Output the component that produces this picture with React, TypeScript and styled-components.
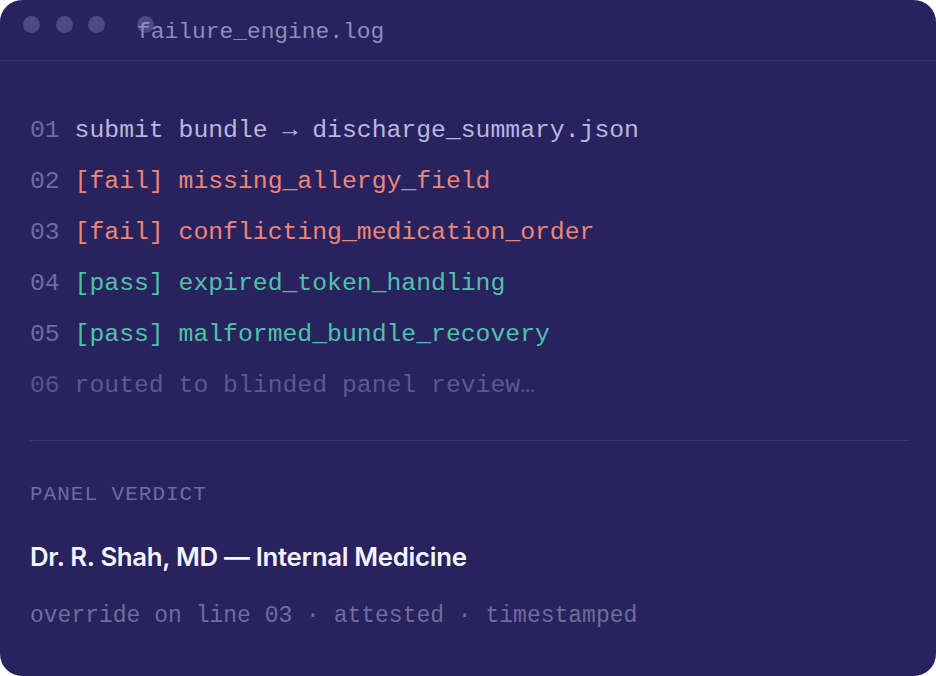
import React from "react";
import styled, { createGlobalStyle } from "styled-components";

const Global = createGlobalStyle`
  html, body { margin: 0; padding: 0; background: #ffffff; }
  body { width: 936px; height: 676px; overflow: hidden; }
`;

const mono = `"Liberation Mono", "DejaVu Sans Mono", monospace`;

const Window = styled.div`
  width: 936px;
  height: 676px;
  box-sizing: border-box;
  background: #28225e;
  border-radius: 22px;
  overflow: hidden;
  display: flex;
  flex-direction: column;
`;

const Header = styled.div`
  height: 61px;
  box-sizing: border-box;
  border-bottom: 1px solid #3a3577;
  display: flex;
  align-items: flex-start;
  padding: 16px 0 0 23px;
`;

const Dot = styled.span<{ $gap: number }>`
  width: 17px;
  height: 17px;
  border-radius: 50%;
  background: #4d4888;
  margin-left: ${(p) => p.$gap}px;
  flex: none;
`;

const Title = styled.span`
  font-family: ${mono};
  font-size: 22.9px;
  line-height: 32px;
  color: #8f8cbc;
  margin-left: -16.5px;
  position: relative;
`;

const Body = styled.div`
  padding: 44px 27px 0 30px;
  display: flex;
  flex-direction: column;
`;

const Line = styled.div`
  font-family: ${mono};
  font-size: 24.75px;
  line-height: 51px;
  white-space: pre;
`;

const Num = styled.span<{ $dim?: boolean }>`
  color: ${(p) => (p.$dim ? "#58548c" : "#6f6ca0")};
`;

const Txt = styled.span<{ $tone: "plain" | "fail" | "pass" | "dim" }>`
  color: ${(p) =>
    p.$tone === "fail"
      ? "#ec8677"
      : p.$tone === "pass"
      ? "#4fc3a8"
      : p.$tone === "dim"
      ? "#5c5891"
      : "#b9b7df"};
`;

const Divider = styled.div`
  height: 1px;
  background: #3a3577;
  margin-top: 29px;
`;

const Label = styled.div`
  font-family: ${mono};
  font-size: 21px;
  letter-spacing: 1px;
  line-height: 30px;
  color: #6f6c9e;
  margin-top: 39px;
  text-transform: uppercase;
`;

const Name = styled.div`
  font-family: Inter, "Noto Sans", sans-serif;
  font-weight: 600;
  font-size: 25.8px;
  letter-spacing: -0.3px;
  line-height: 34px;
  color: #f4f3fb;
  margin-top: 30px;
`;

const Foot = styled.div`
  font-family: ${mono};
  font-size: 23px;
  line-height: 30px;
  color: #6f6c9e;
  margin-top: 27px;
  white-space: pre;
`;

type Tone = "plain" | "fail" | "pass" | "dim";
const lines: { n: string; tone: Tone; text: string; tag?: string }[] = [
  { n: "01", tone: "plain", text: "submit bundle → discharge_summary.json" },
  { n: "02", tone: "fail", tag: "[fail]", text: "missing_allergy_field" },
  { n: "03", tone: "fail", tag: "[fail]", text: "conflicting_medication_order" },
  { n: "04", tone: "pass", tag: "[pass]", text: "expired_token_handling" },
  { n: "05", tone: "pass", tag: "[pass]", text: "malformed_bundle_recovery" },
  { n: "06", tone: "dim", text: "routed to blinded panel review…" },
];

export default function App() {
  return (
    <>
      <Global />
      <Window>
        <Header>
          <Dot $gap={0} />
          <Dot $gap={15.5} />
          <Dot $gap={15.5} />
          <Dot $gap={31.5} />
          <Title>failure_engine.log</Title>
        </Header>
        <Body>
          {lines.map((l) => (
            <Line key={l.n}>
              <Num $dim={l.tone === "dim"}>{l.n} </Num>
              <Txt $tone={l.tone}>{l.tag ? `${l.tag} ${l.text}` : l.text}</Txt>
            </Line>
          ))}
          <Divider />
          <Label>Panel Verdict</Label>
          <Name>Dr. R. Shah, MD — Internal Medicine</Name>
          <Foot>override on line 03 · attested · timestamped</Foot>
        </Body>
      </Window>
    </>
  );
}
